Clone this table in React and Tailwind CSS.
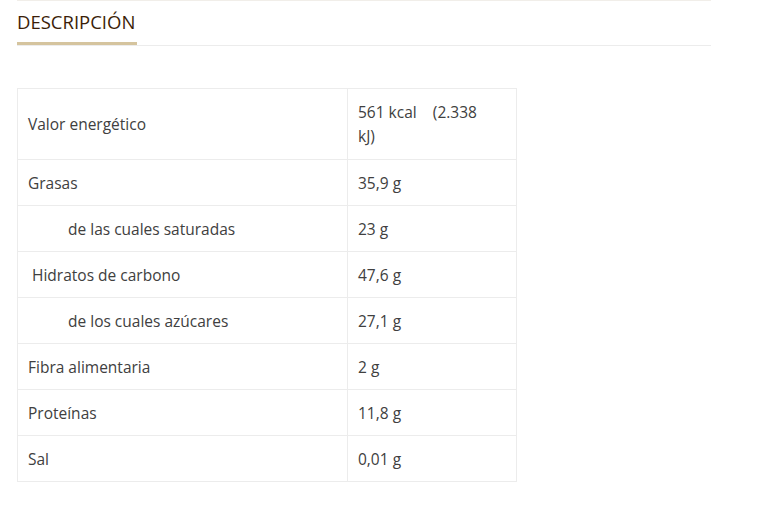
const rows = [
  { label: 'Valor energético', value: ['561 kcal\u00a0\u00a0\u00a0\u00a0(2.338', 'kJ)'] },
  { label: 'Grasas', value: ['35,9 g'] },
  { label: 'de las cuales saturadas', value: ['23 g'], indent: true },
  { label: '\u00a0Hidratos de carbono', value: ['47,6 g'] },
  { label: 'de los cuales azúcares', value: ['27,1 g'], indent: true },
  { label: 'Fibra alimentaria', value: ['2 g'] },
  { label: 'Proteínas', value: ['11,8 g'] },
  { label: 'Sal', value: ['0,01 g'] },
];

export default function App() {
  return (
    <div className="min-h-[505px] w-[777px] bg-white font-['Open_Sans',sans-serif] text-[#404040]">
      <div className="ml-[17px] w-[694px] border-t border-[#f1eee9]">
        <div className="flex border-b border-[#ececec]">
          <div className="border-b-[3px] border-[#d5c49e] pt-[9px] pb-[8px] pr-[2px] text-[18.5px] leading-[24px] text-[#3b1e08]">
            DESCRIPCIÓN
          </div>
        </div>
      </div>

      <div className="ml-[17px] mt-[42px] w-[500px]">
        <table className="w-full border-collapse text-[15.5px] leading-[24px]">
          <tbody>
            {rows.map((r) => {
              const pad = r.value.length > 1 ? 'pt-[11px] pb-[11px]' : 'pt-[11px] pb-[10px]';
              return (
                <tr key={r.label}>
                  <td className={`w-[330px] border border-[#ececec] px-[10px] align-middle ${pad}`}>
                    <span className={r.indent ? 'pl-[40px]' : ''}>{r.label}</span>
                  </td>
                  <td className={`border border-[#ececec] px-[10px] align-middle ${pad}`}>
                    {r.value.map((v, i) => (
                      <div key={i}>{v}</div>
                    ))}
                  </td>
                </tr>
              );
            })}
          </tbody>
        </table>
      </div>
    </div>
  );
}
